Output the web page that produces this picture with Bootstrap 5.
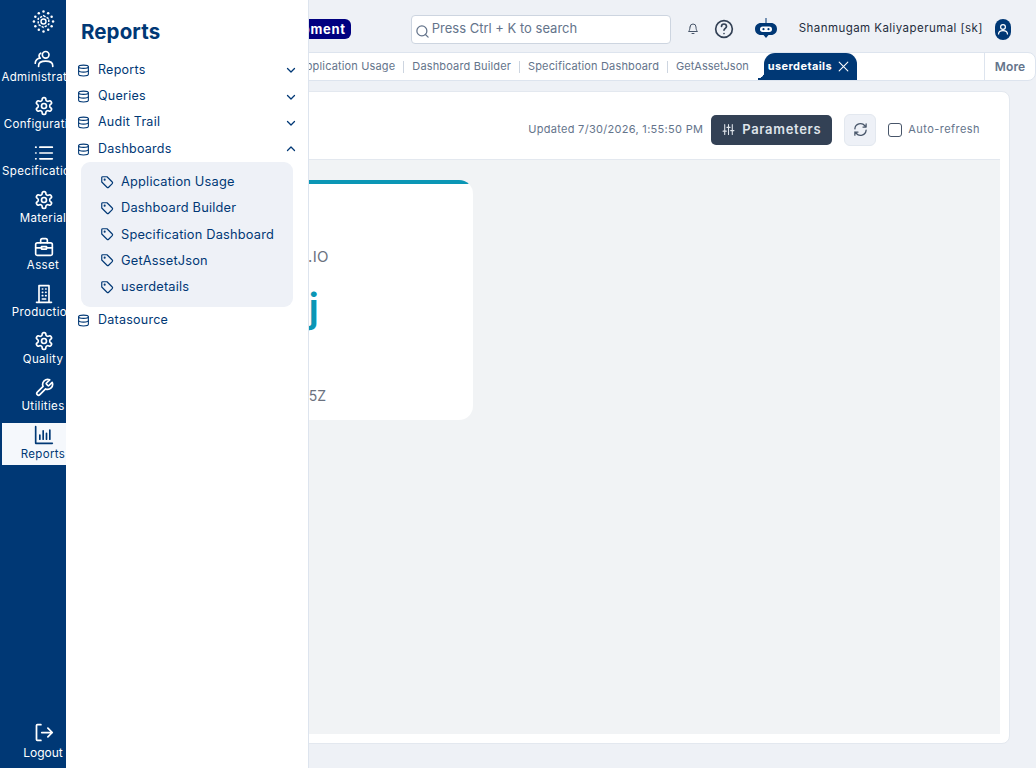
<!DOCTYPE html>
<html lang="en">

<head>
    <meta charset="UTF-8">
    <meta name="viewport" content="width=device-width, initial-scale=1.0">
    <title>Reports | userdetails</title>
    <link href="https://cdn.jsdelivr.net/npm/bootstrap@5.3.2/dist/css/bootstrap.min.css" rel="stylesheet">
    <style>
        body {
            height: 768px;
            overflow: hidden;
            background-color: #eef1f6;
            font-family: "Inter", "Liberation Sans", sans-serif;
            color: #003875;
        }
        .ico { fill: none; stroke: currentColor; stroke-width: 2; stroke-linecap: round; stroke-linejoin: round; flex: none; }
        .rail { width: 86px; height: 768px; background-color: #003875; color: #fff; flex: none; }
        .rail-logo { height: 47px; padding-top: 8px; }
        .rail-list { gap: 5px; }
        .rail-item { height: 42px; margin-left: 2px; padding-top: 2px; font-size: 11.5px; line-height: 14px; letter-spacing: .35px; white-space: nowrap; width: 84px; color: #fff; }
        .rail-item.on { background-color: #f5f8fc; color: #003875; }
        .rail-item .lbl { margin-top: 1px; margin-left: -2px; }
        .rail-item.on .lbl { margin-top: 2px; }
        .rail-foot { padding-bottom: 8px; font-size: 12px; line-height: 14px; gap: 3px; }
        .drawer { position: absolute; left: 66px; top: 0; width: 243px; height: 768px; background: #fff; border-right: 1px solid #dde4ee; padding: 19px 11px 0 11px; }
        .drawer-title { font-size: 20.5px; line-height: 26px; font-weight: 700; margin: 0 0 12px 4px; letter-spacing: .1px; }
        .menu-row { height: 26.35px; font-size: 12.5px; letter-spacing: .25px; gap: 8px; }
        .menu-row .ico:last-child:not(:first-child) { margin-left: auto; margin-right: 0; stroke-width: 2.6; width: 12px; height: 12px; }
        .sub-panel { background: #eef1f7; border-radius: 9px; margin: 0 4px; padding: 6px 0 7px 19px; }
        .sub-row { height: 26.3px; font-size: 12.8px; letter-spacing: .2px; gap: 7px; white-space: nowrap; }
        .topbar { height: 52px; padding: 6px 25px 0 0; font-size: 11.5px; color: #1f2d3d; }
        .env-tag { margin-left: auto; background: #000080; color: #fff; font-weight: 700; font-size: 13px; letter-spacing: .7px; line-height: 20px; padding: 0 5px; border-radius: 6px; margin-right: 60px; }
        .search-box { width: 260px; height: 29px; background: #fff; border: 1px solid #cdd5e0; border-radius: 4px; color: #64748b; font-size: 13px; padding: 0 3px; gap: 2px; margin-right: 16px; }
        .gap-help { margin-left: 15px; }
        .gap-wide { margin-left: 21px; }
        .user-name { margin-left: 22px; margin-right: 12px; letter-spacing: .44px; }
        .tabbar { height: 29px; background: #fff; border: 1px solid #dde4ee; border-radius: 0 8px 8px 0; font-size: 11px; color: #64748b; letter-spacing: .15px; white-space: nowrap; }
        .tab-strip { width: 770px; height: 100%; flex: none; }
        .tab-sep { width: 1px; height: 12px; background: #cdd5e0; margin: 0 8px; flex: none; }
        .tab-tight { letter-spacing: 0; }
        .tab-on { position: relative; background: #003875; color: #fff; font-weight: 700; height: 27px; margin-left: 15px; padding: 0 7px 0 4px; border-radius: 11px 11px 0 0; font-size: 11px; gap: 5px; align-self: flex-end; letter-spacing: .4px; }
        .tab-on::before { content: ""; position: absolute; left: -6px; bottom: 0; width: 6px; height: 8px; background: radial-gradient(circle at 0 0, transparent 6px, #003875 6.500px); }
        .tab-more { margin-left: auto; width: 51px; height: 100%; border-left: 1px solid #dde4ee; font-weight: 600; font-size: 12px; }
        .sheet { height: 653px; margin: 10px 26px 0 4px; background: #fff; border: 1px solid #e3e8ef; border-radius: 8px; padding: 0 9px 8px 0; }
        .sheet-head { height: 68px; border-bottom: 1px solid #e3e8ef; padding: 8px 20px 0 0; font-size: 11px; color: #64748b; letter-spacing: .3px; }
        .auto-label { letter-spacing: .45px; }
        .btn-params { background: #334155; color: #dfe4ea; border: 0; font-size: 13px; font-weight: 600; letter-spacing: .7px; height: 30px; width: 121px; border-radius: 5px; gap: 7px; margin-left: 8px; }
        .btn-sync { width: 32px; height: 32px; background: #eef1f7; border: 1px solid #e3e8ef; border-radius: 6px; margin: 0 12px; color: #475569; }
        .check-box { width: 14px; height: 14px; border: 1px solid #475569; border-radius: 3px; background: #fff; margin-right: 6px; }
        .canvas { height: 574px; background: #f1f3f5; padding: 20px 0 0 0; }
        .kpi { width: 382px; height: 240px; padding-top: 4px; background: linear-gradient(#0b96b5 4px, #fff 4px); border-radius: 14px; color: #6b7280; }
        .kpi-mail { font-size: 15px; line-height: 20px; padding: 63px 144px 0 0; letter-spacing: .4px; }
        .kpi-value { font-size: 40px; line-height: 48px; color: #0b96b5; font-weight: 600; padding: 17px 154px 0 0; }
        .kpi-time { font-size: 14px; line-height: 20px; padding: 54px 147px 0 0; }
    </style>
</head>

<body>
    <svg width="0" height="0" class="position-absolute">
        <symbol id="i-gear" viewBox="0 0 24 24">
            <path d="M12.22 2h-.44a2 2 0 0 0-2 2v.18a2 2 0 0 1-1 1.73l-.43.25a2 2 0 0 1-2 0l-.15-.08a2 2 0 0 0-2.73.73l-.22.38a2 2 0 0 0 .73 2.73l.15.1a2 2 0 0 1 1 1.72v.51a2 2 0 0 1-1 1.74l-.15.09a2 2 0 0 0-.73 2.73l.22.38a2 2 0 0 0 2.73.73l.15-.08a2 2 0 0 1 2 0l.43.25a2 2 0 0 1 1 1.73V20a2 2 0 0 0 2 2h.44a2 2 0 0 0 2-2v-.18a2 2 0 0 1 1-1.73l.43-.25a2 2 0 0 1 2 0l.15.08a2 2 0 0 0 2.73-.73l.22-.39a2 2 0 0 0-.73-2.73l-.15-.08a2 2 0 0 1-1-1.74v-.5a2 2 0 0 1 1-1.74l.15-.09a2 2 0 0 0 .73-2.73l-.22-.38a2 2 0 0 0-2.73-.73l-.15.08a2 2 0 0 1-2 0l-.43-.25a2 2 0 0 1-1-1.73V4a2 2 0 0 0-2-2z"/>
            <circle cx="12" cy="12" r="3"/>
        </symbol>
        <symbol id="i-db" viewBox="0 0 24 24">
            <ellipse cx="12" cy="5" rx="9" ry="3"/>
            <path d="M3 5v14c0 1.700 4 3 9 3s9-1.300 9-3V5"/>
            <path d="M3 12c0 1.700 4 3 9 3s9-1.300 9-3"/>
        </symbol>
        <symbol id="i-tag" viewBox="0 0 24 24">
            <path d="M3 4.500A1.500 1.500 0 0 1 4.500 3H12l9 9a2 2 0 0 1 0 2.800L14.800 21a2 2 0 0 1-2.800 0l-9-9z"/>
            <circle cx="8" cy="8" r=".8"/>
        </symbol>
        <symbol id="i-down" viewBox="0 0 24 24"><path d="m5 9 7 7 7-7"/></symbol>
        <symbol id="i-up" viewBox="0 0 24 24"><path d="m5 15 7-7 7 7"/></symbol>
    </svg>

    <div class="d-flex">
        <!-- Left rail -->
        <nav class="rail d-flex flex-column">
            <div class="rail-logo text-center">
                <svg width="23" height="23" viewBox="0 0 24 24" fill="#fff">
                    <circle cx="12" cy="1.500" r="1.300"/><circle cx="16.900" cy="3.500" r="1.300"/><circle cx="20.500" cy="7" r="1.300"/><circle cx="22" cy="12" r="1.300"/>
                    <circle cx="20.500" cy="17" r="1.300"/><circle cx="16.900" cy="20.500" r="1.300"/><circle cx="12" cy="22.500" r="1.300"/><circle cx="7.100" cy="20.500" r="1.300"/>
                    <circle cx="3.500" cy="17" r="1.300"/><circle cx="2" cy="12" r="1.300"/><circle cx="3.500" cy="7" r="1.300"/><circle cx="7.100" cy="3.500" r="1.300"/>
                    <path d="M12 5.800 17.500 9v6L12 18.200 6.500 15V9z" fill="none" stroke="#fff" stroke-width="1.500" stroke-dasharray="2.500 1.200"/>
                    <circle cx="12" cy="12" r="2.600" fill="none" stroke="#fff" stroke-width="1.500"/>
                </svg>
            </div>
            <div class="rail-list d-flex flex-column">
                <a class="rail-item d-flex flex-column align-items-center text-decoration-none">
                    <svg class="ico" width="20" height="20" viewBox="0 0 24 24" stroke-width="1.600"><circle cx="14" cy="7" r="4"/><path d="M5.500 21v-1c0-3.500 3.500-5.500 8.500-5.500s8.500 2 8.500 5.500v1"/><path d="M8 5a3.500 3.500 0 0 0-.5 6A6 6 0 0 0 1.500 17"/></svg>
                    <span class="lbl">Administration</span>
                </a>
                <a class="rail-item d-flex flex-column align-items-center text-decoration-none">
                    <svg class="ico" width="20" height="20"><use href="#i-gear"/></svg>
                    <span class="lbl">Configuration</span>
                </a>
                <a class="rail-item d-flex flex-column align-items-center text-decoration-none">
                    <svg class="ico" width="20" height="20" viewBox="0 0 24 24"><path d="M7 5h15M7 12h15M7 19h15M2 5h.5M2 12h.5M2 19h.5"/></svg>
                    <span class="lbl">Specifications</span>
                </a>
                <a class="rail-item d-flex flex-column align-items-center text-decoration-none">
                    <svg class="ico" width="20" height="20"><use href="#i-gear"/></svg>
                    <span class="lbl">Material</span>
                </a>
                <a class="rail-item d-flex flex-column align-items-center text-decoration-none">
                    <svg class="ico" width="20" height="20" viewBox="0 0 24 24"><rect x="2" y="7" width="20" height="15" rx="2"/><path d="M8 7V4a2 2 0 0 1 2-2h4a2 2 0 0 1 2 2v3M2 13h7M15 13h7"/><rect x="9" y="11.500" width="6" height="3"/></svg>
                    <span class="lbl">Asset</span>
                </a>
                <a class="rail-item d-flex flex-column align-items-center text-decoration-none">
                    <svg class="ico" width="20" height="20" viewBox="0 0 24 24" stroke-width="1.800"><path d="M3 22h18M6 22V2h12v20"/><path d="M10 6h.5M14 6h.5M10 10h.5M14 10h.5M10 14h.5M14 14h.5M10 18h4"/></svg>
                    <span class="lbl">Production</span>
                </a>
                <a class="rail-item d-flex flex-column align-items-center text-decoration-none">
                    <svg class="ico" width="20" height="20"><use href="#i-gear"/></svg>
                    <span class="lbl">Quality</span>
                </a>
                <a class="rail-item d-flex flex-column align-items-center text-decoration-none">
                    <svg class="ico" width="20" height="20" viewBox="0 0 24 24" stroke-width="1.800"><path d="M15 6a1 1 0 0 0 0 1.400l1.600 1.600a1 1 0 0 0 1.400 0l3.800-3.800a6 6 0 0 1-7.900 7.900l-6.900 6.900a2.100 2.100 0 0 1-3-3l6.900-6.900a6 6 0 0 1 7.900-7.900z"/></svg>
                    <span class="lbl">Utilities</span>
                </a>
                <a class="rail-item on d-flex flex-column align-items-center text-decoration-none">
                    <svg class="ico" width="20" height="20" viewBox="0 0 24 24" stroke-width="1.800"><path d="M2 2v20h20M7 17v-5M11 17V7M15 17v-7M19 17V6"/></svg>
                    <span class="lbl">Reports</span>
                </a>
            </div>
            <a class="rail-foot mt-auto d-flex flex-column align-items-center text-decoration-none text-white">
                <svg class="ico" width="21" height="21" viewBox="0 0 24 24" stroke-width="1.800"><path d="M9 3H5a1 1 0 0 0-1 1v16a1 1 0 0 0 1 1h4M10 12h12M17 7l5 5-5 5"/></svg>
                <span>Logout</span>
            </a>
        </nav>

        <!-- Main area, partly under the drawer -->
        <main class="flex-grow-1">
            <header class="topbar d-flex align-items-center">
                <span class="env-tag">Development</span>
                <div class="search-box d-flex align-items-center">
                    <svg class="ico mt-1" width="15" height="15" viewBox="0 0 24 24"><circle cx="11" cy="11" r="8"/><path d="m21 21-4.300-4.300"/></svg>
                    <span>Press Ctrl + K to search</span>
                </div>
                <svg class="ico" width="12" height="12" viewBox="0 0 24 24" stroke-width="1.800" color="#475569"><path d="M6 8a6 6 0 0 1 12 0c0 7 3 9 3 9H3s3-2 3-9M10 21h4"/></svg>
                <svg class="ico gap-help" width="20" height="20" viewBox="0 0 24 24" color="#334155"><circle cx="12" cy="12" r="10"/><path d="M9 9a3 3 0 0 1 6 0c0 2-3 2.500-3 4.500M12 17.500h.01"/></svg>
                <svg class="gap-wide" width="22" height="23" viewBox="0 0 22 23" fill="#003875"><path d="M10.500 0h1v6h-1z"/><path d="M6 5h10c3.500 0 6 2.500 6 6s-2.500 6-6 6h-2.500l-2.500 3-2.500-3H6c-3.500 0-6-2.500-6-6s2.500-6 6-6z"/><rect x="5" y="8.500" width="12" height="5.500" rx="2.700" fill="#fff"/><circle cx="8.500" cy="11.200" r="1.100"/><circle cx="13.500" cy="11.200" r="1.100"/></svg>
                <span class="user-name">Shanmugam Kaliyaperumal [sk]</span>
                <svg width="16" height="21" viewBox="0 0 16 21"><rect width="16" height="21" rx="8" fill="#003875"/><circle cx="8" cy="8" r="2.400" fill="none" stroke="#fff" stroke-width="1.200"/><path d="M3.500 15.500c0-3 2-3.800 4.500-3.800s4.500.8 4.500 3.800" fill="none" stroke="#fff" stroke-width="1.200"/></svg>
            </header>

            <div class="tabbar d-flex align-items-center">
                <div class="tab-strip d-flex align-items-center justify-content-end">
                    <span>Application Usage</span>
                    <i class="tab-sep"></i>
                    <span>Dashboard Builder</span>
                    <i class="tab-sep"></i>
                    <span>Specification Dashboard</span>
                    <i class="tab-sep"></i>
                    <span class="tab-tight">GetAssetJson</span>
                    <span class="tab-on d-flex align-items-center">userdetails
                        <svg class="ico" width="13" height="13" viewBox="0 0 24 24"><path d="M4 4l16 16M20 4 4 20"/></svg>
                    </span>
                </div>
                <span class="tab-more d-flex align-items-center justify-content-center">More</span>
            </div>

            <section class="sheet">
                <div class="sheet-head d-flex align-items-center justify-content-end">
                    <span>Updated 7/30/2026, 1:55:50 PM</span>
                    <button class="btn-params d-flex align-items-center justify-content-center" type="button">
                        <svg class="ico" width="13" height="13" viewBox="0 0 24 24"><path d="M5 3v18M12 3v18M19 3v18M2 15h6M9 8h6M16 14h6"/></svg>
                        Parameters
                    </button>
                    <span class="btn-sync d-flex align-items-center justify-content-center">
                        <svg class="ico" width="15" height="15" viewBox="0 0 24 24"><path d="M3 11a9 9 0 0 1 16-5l2 2M21 3v5h-5M21 13a9 9 0 0 1-16 5l-2-2M3 21v-5h5"/></svg>
                    </span>
                    <span class="check-box"></span>
                    <span class="auto-label">Auto-refresh</span>
                </div>
                <div class="canvas">
                    <div class="kpi text-end">
                        <div class="kpi-mail">.IO</div>
                        <div class="kpi-value">j</div>
                        <div class="kpi-time">5Z</div>
                    </div>
                </div>
            </section>
        </main>
    </div>

    <!-- Reports drawer over the page -->
    <aside class="drawer">
        <h1 class="drawer-title">Reports</h1>
        <div class="menu-row d-flex align-items-center"><svg class="ico" width="13" height="13"><use href="#i-db"/></svg>Reports<svg class="ico" width="13" height="13"><use href="#i-down"/></svg></div>
        <div class="menu-row d-flex align-items-center"><svg class="ico" width="13" height="13"><use href="#i-db"/></svg>Queries<svg class="ico" width="13" height="13"><use href="#i-down"/></svg></div>
        <div class="menu-row d-flex align-items-center"><svg class="ico" width="13" height="13"><use href="#i-db"/></svg>Audit Trail<svg class="ico" width="13" height="13"><use href="#i-down"/></svg></div>
        <div class="menu-row d-flex align-items-center"><svg class="ico" width="13" height="13"><use href="#i-db"/></svg>Dashboards<svg class="ico" width="13" height="13"><use href="#i-up"/></svg></div>
        <div class="sub-panel">
            <div class="sub-row d-flex align-items-center"><svg class="ico" width="14" height="14"><use href="#i-tag"/></svg>Application Usage</div>
            <div class="sub-row d-flex align-items-center"><svg class="ico" width="14" height="14"><use href="#i-tag"/></svg>Dashboard Builder</div>
            <div class="sub-row d-flex align-items-center"><svg class="ico" width="14" height="14"><use href="#i-tag"/></svg>Specification Dashboard</div>
            <div class="sub-row d-flex align-items-center"><svg class="ico" width="14" height="14"><use href="#i-tag"/></svg>GetAssetJson</div>
            <div class="sub-row d-flex align-items-center"><svg class="ico" width="14" height="14"><use href="#i-tag"/></svg>userdetails</div>
        </div>
        <div class="menu-row d-flex align-items-center"><svg class="ico" width="13" height="13"><use href="#i-db"/></svg>Datasource</div>
    </aside>

    <script src="https://cdn.jsdelivr.net/npm/bootstrap@5.3.2/dist/js/bootstrap.bundle.min.js"></script>
</body>

</html>
